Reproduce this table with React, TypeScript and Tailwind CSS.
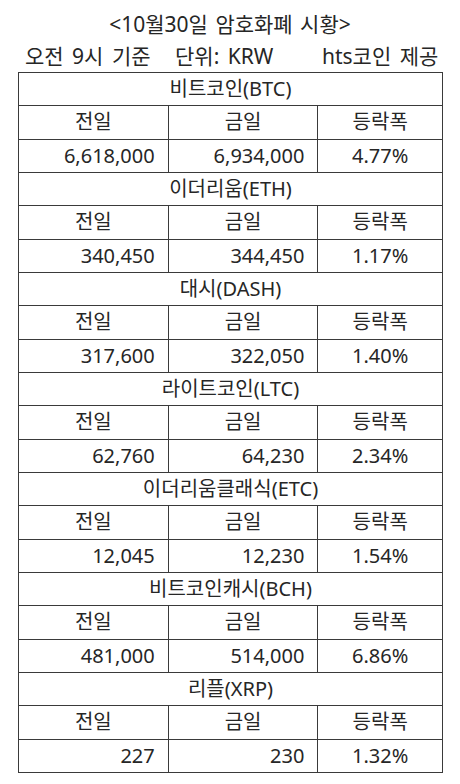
const coins = [
  { name: "비트코인(BTC)", prev: "6,618,000", today: "6,934,000", rate: "4.77%" },
  { name: "이더리움(ETH)", prev: "340,450", today: "344,450", rate: "1.17%" },
  { name: "대시(DASH)", prev: "317,600", today: "322,050", rate: "1.40%" },
  { name: "라이트코인(LTC)", prev: "62,760", today: "64,230", rate: "2.34%" },
  { name: "이더리움클래식(ETC)", prev: "12,045", today: "12,230", rate: "1.54%" },
  { name: "비트코인캐시(BCH)", prev: "481,000", today: "514,000", rate: "6.86%" },
  { name: "리플(XRP)", prev: "227", today: "230", rate: "1.32%" },
];

const cell = "border-[1.5px] border-[#3a3a3a] p-0";

const App = () => {
  return (
    <div
      className="w-[460px] h-[784px] bg-white text-[#262626]"
      style={{ fontFamily: '"Noto Sans", "Noto Sans CJK KR", sans-serif' }}
    >
      {/* 제목 */}
      <div className="h-[40px] flex items-end justify-center text-[21px] leading-none pb-[5px] [word-spacing:2px] whitespace-nowrap">
        &lt;10월30일 암호화폐 시황&gt;
      </div>
      <div className="h-[32px] flex items-center text-[21px] leading-none pl-[25px] [word-spacing:3px] whitespace-nowrap">
        <span className="w-[150px] shrink-0">오전 9시 기준</span>
        <span className="w-[147px] shrink-0">단위: KRW</span>
        <span className="shrink-0">hts코인 제공</span>
      </div>

      <table className="ml-[18px] w-[425px] border-collapse text-[20px] leading-none">
        <colgroup>
          <col className="w-[150px]" />
          <col className="w-[150px]" />
          <col className="w-[125px]" />
        </colgroup>
        <tbody>
          {coins.map((c) => (
            <>
              <tr key={c.name + "n"} className="h-[33.33px]">
                <td colSpan={3} className={`${cell} text-center`}>
                  {c.name}
                </td>
              </tr>
              <tr key={c.name + "h"} className="h-[33.33px]">
                <td className={`${cell} text-center`}>전일</td>
                <td className={`${cell} text-center`}>금일</td>
                <td className={`${cell} text-center`}>등락폭</td>
              </tr>
              <tr key={c.name + "d"} className="h-[33.33px]">
                <td className={`${cell} text-right pr-[13px]`}>{c.prev}</td>
                <td className={`${cell} text-right pr-[13px]`}>{c.today}</td>
                <td className={`${cell} text-center`}>{c.rate}</td>
              </tr>
            </>
          ))}
        </tbody>
      </table>
    </div>
  );
};

export default App;
